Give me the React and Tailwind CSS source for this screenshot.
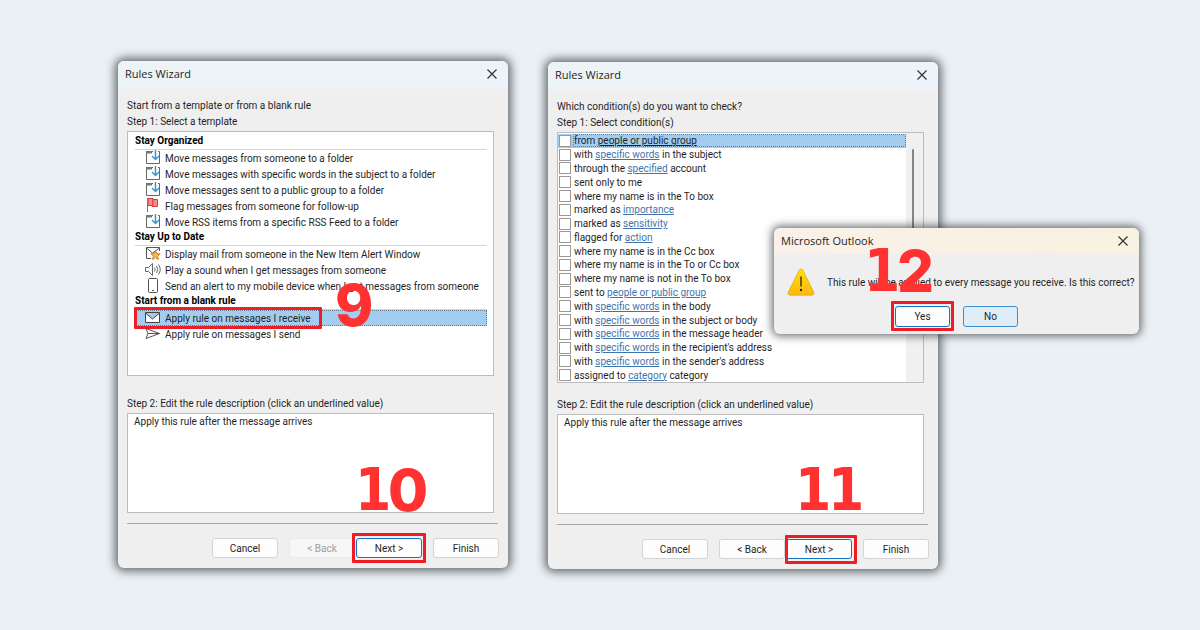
import { useState } from "react";

const templateGroups = [
  {
    title: "Stay Organized",
    items: [
      { icon: "folder", label: "Move messages from someone to a folder" },
      {
        icon: "folder",
        label: "Move messages with specific words in the subject to a folder",
      },
      {
        icon: "folder",
        label: "Move messages sent to a public group to a folder",
      },
      { icon: "flag", label: "Flag messages from someone for follow-up" },
      {
        icon: "folder",
        label: "Move RSS items from a specific RSS Feed to a folder",
      },
    ],
  },
  {
    title: "Stay Up to Date",
    items: [
      {
        icon: "alert",
        label: "Display mail from someone in the New Item Alert Window",
      },
      { icon: "sound", label: "Play a sound when I get messages from someone" },
      {
        icon: "phone",
        label:
          "Send an alert to my mobile device when I get messages from someone",
      },
    ],
  },
  {
    title: "Start from a blank rule",
    items: [
      { icon: "mail", label: "Apply rule on messages I receive" },
      { icon: "send", label: "Apply rule on messages I send" },
    ],
  },
];

// [text before, link, text after]
const conditions = [
  ["from ", "people or public group", ""],
  ["with ", "specific words", " in the subject"],
  ["through the ", "specified", " account"],
  ["sent only to me", "", ""],
  ["where my name is in the To box", "", ""],
  ["marked as ", "importance", ""],
  ["marked as ", "sensitivity", ""],
  ["flagged for ", "action", ""],
  ["where my name is in the Cc box", "", ""],
  ["where my name is in the To or Cc box", "", ""],
  ["where my name is not in the To box", "", ""],
  ["sent to ", "people or public group", ""],
  ["with ", "specific words", " in the body"],
  ["with ", "specific words", " in the subject or body"],
  ["with ", "specific words", " in the message header"],
  ["with ", "specific words", " in the recipient's address"],
  ["with ", "specific words", " in the sender's address"],
  ["assigned to ", "category", " category"],
];

const icons = {
  folder: (
    <>
      <path d="M1.500 1.500v12h13v-12H13M1 1.500h7" stroke="#666" fill="none" />
      <path d="M1 1h6v2.500H1z" fill="#777" />
      <path
        d="M10.500 0v9M7 6l3.500 3.500L14 6"
        stroke="#3f97cf"
        strokeWidth="1.500"
        fill="none"
      />
    </>
  ),
  flag: (
    <>
      <path d="M2.500 0v14" stroke="#777" />
      <path d="M3 .5h5v7H3z" fill="#f58a8a" stroke="#e03c3c" />
      <path d="M8 1.500h4.500v7H7v-1h1z" fill="#f58a8a" stroke="#e03c3c" />
    </>
  ),
  alert: (
    <>
      <path
        d="M6 12.500H1.500v-11h13V5M1.500 2l6 5 7-5"
        stroke="#555"
        fill="none"
      />
      <path
        d="M10.500 4.500l1.300 3.200 3.400.2-2.600 2.200.9 3.400-3-1.900-3 1.900.9-3.400-2.600-2.200 3.400-.2z"
        fill="#f7b45c"
        stroke="#e07f1c"
      />
    </>
  ),
  sound: (
    <path
      d="M.5 5.500h3l4-4v12l-4-4h-3zM9.500 5.500q1.500 2 0 4M11.500 4q2.500 3.500 0 7M13.500 2.500q3.500 5 0 10"
      stroke="#666"
      fill="none"
    />
  ),
  phone: (
    <>
      <rect x="3.500" y=".5" width="9" height="14" rx="1" stroke="#555" fill="none" />
      <path d="M7 12.500h2" stroke="#555" />
    </>
  ),
  mail: (
    <path d="M.5 2.500h14v10H.5zM.5 3l7 6 7-6" stroke="#444" fill="#fff" />
  ),
  send: (
    <path
      d="M1 2.500l13.500 5-13.500 5 2-5zM3 7.500h11"
      stroke="#555"
      fill="none"
    />
  ),
};

const RowIcon = ({ name }) => (
  <svg viewBox="0 0 16 16" className="size-4 shrink-0" aria-hidden="true">
    {icons[name]}
  </svg>
);

const CloseButton = () => (
  <button type="button" aria-label="Close" className="p-1">
    <svg viewBox="0 0 10 10" className="size-[10px]">
      <path d="M.5.5l9 9M9.500.5l-9 9" stroke="#333" strokeWidth="1.200" />
    </svg>
  </button>
);

const WizardButton = ({ children, disabled, primary }) => (
  <button
    type="button"
    disabled={disabled}
    className={`h-5 w-[66px] rounded-[3px] border text-[10px] ${
      primary
        ? "border-[#1474c4] bg-[#fdfdfd]"
        : disabled
          ? "border-[#ebebeb] bg-[#f6f6f6] text-[#a0a0a0]"
          : "border-[#d4d4d4] bg-[#fdfdfd]"
    }`}
  >
    {children}
  </button>
);

const Highlight = ({ className }) => (
  <span
    className={`pointer-events-none absolute rounded-[1px] border-[3px] border-[#ee1c25] ${className}`}
  />
);

const StepNumber = ({ value, className }) => (
  <span
    className={`pointer-events-none absolute flex text-[58px] leading-none font-extrabold text-[#ff3131] ${className}`}
  >
    {value.split("").map((digit, index) => (
      <span
        key={index}
        className={
          digit === "1"
            ? "w-[33px] font-['DejaVu_Sans_Condensed','DejaVu_Sans',sans-serif]"
            : "font-[Inter,sans-serif]"
        }
      >
        {digit}
      </span>
    ))}
  </span>
);

const Wizard = ({
  question,
  step,
  children,
  backDisabled,
  number,
  numberPlace,
  ring,
  className,
}) => (
  <section
    className={`relative min-w-0 flex-1 rounded-[6px] bg-[#efefef] shadow-[0_0_10px_3px_rgba(40,45,50,0.7)] ${className}`}
  >
    <header className="flex h-7 items-center justify-between rounded-t-[6px] bg-linear-to-r from-[#edf4f6] to-[#edf3fa] px-[7px] pb-0.5">
      <h2 className="font-['Open_Sans',sans-serif] text-[11px]">
        Rules Wizard
      </h2>
      <CloseButton />
    </header>
    <div className="px-[9px] pt-[9px] pb-[10px]">
      <p className="leading-4">{question}</p>
      <p className="leading-4">{step}</p>
      <div className="mt-px mr-[5px] h-[265px]">{children}</div>
      <p className="leading-4">
        Step 2: Edit the rule description (click an underlined value)
      </p>
      <div className="mt-px mr-[5px] h-[100px] border border-[#bcbcbc] bg-white px-1.5 leading-4">
        Apply this rule after the message arrives
      </div>
      <hr className="mt-[10px] mr-px border-[#aaa]" />
      <div className="mt-[14px] flex justify-end">
        <WizardButton>Cancel</WizardButton>
        <div className="ml-[11px]">
          <WizardButton disabled={backDisabled}>&lt; Back</WizardButton>
        </div>
        <div className="relative mr-[11px] ml-px">
          <WizardButton primary>Next &gt;</WizardButton>
          <Highlight className={ring} />
          <StepNumber value={number} className={numberPlace} />
        </div>
        <WizardButton>Finish</WizardButton>
      </div>
    </div>
  </section>
);

const TemplateList = () => {
  const [selected, setSelected] = useState("Apply rule on messages I receive");

  return (
    <div className="h-[245px] border border-[#bcbcbc] bg-white pt-0.5 pr-1.5 pl-[7px]">
      {templateGroups.map((group) => (
        <div key={group.title}>
          <h3 className="h-4 border-b border-[#d5d5d5] leading-[14px] font-bold text-black">
            {group.title}
          </h3>
          <ul>
            {group.items.map((item) => (
              <li key={item.label} className="relative">
                <button
                  type="button"
                  onClick={() => setSelected(item.label)}
                  className={`flex h-4 w-full items-center gap-1 pl-[10px] text-left whitespace-nowrap ${
                    item.label === selected
                      ? "bg-[#a3cdef] outline-1 -outline-offset-1 outline-[#667c8e] outline-dotted"
                      : ""
                  }`}
                >
                  <RowIcon name={item.icon} />
                  {item.label}
                </button>
                {item.label === selected && (
                  <>
                    <Highlight className="-top-[3px] -left-px h-[22px] w-[188px]" />
                    <StepNumber value="9" className="-top-[34px] left-[200px]" />
                  </>
                )}
              </li>
            ))}
          </ul>
        </div>
      ))}
    </div>
  );
};

const ConditionList = () => (
  <div className="flex h-[251px] border border-[#bcbcbc] bg-white">
    <ul className="flex flex-1 flex-col pt-px">
      {conditions.map(([before, link, after], index) => (
        <li
          key={index}
          className={`flex min-h-0 flex-1 items-center gap-0.5 pl-px ${
            index === 0 ? "bg-[#a3cdef]" : ""
          }`}
        >
          <input
            type="checkbox"
            id={`condition-${index}`}
            className="size-3 shrink-0 appearance-none border border-[#999] bg-white"
          />
          <label
            htmlFor={`condition-${index}`}
            className={`flex-1 pl-px leading-[13px] whitespace-pre ${
              index === 0
                ? "outline-1 -outline-offset-1 outline-[#667c8e] outline-dotted"
                : ""
            }`}
          >
            {before}
            {link && (
              <a
                href="#"
                className={`underline ${index === 0 ? "" : "text-[#3f74ad]"}`}
              >
                {link}
              </a>
            )}
            {after}
          </label>
        </li>
      ))}
    </ul>
    <div className="w-[17px] bg-[#f0f0f0] pt-4 pl-[6px]">
      <div className="h-[120px] w-0.5 rounded bg-[#858585]" />
    </div>
  </div>
);

const ConfirmDialog = () => (
  <section
    role="dialog"
    aria-label="Microsoft Outlook"
    className="absolute top-[228px] left-[774px] w-[365px] rounded-[6px] bg-[#efefef] pb-[7px] shadow-[0_0_9px_2px_rgba(40,45,50,0.7)]"
  >
    <header className="flex h-[26px] items-center justify-between rounded-t-[6px] bg-linear-to-r from-[#faf0e8] to-[#f8f2e1] px-[7px]">
      <h2 className="font-['Open_Sans',sans-serif] text-[11px]">
        Microsoft Outlook
      </h2>
      <CloseButton />
    </header>
    <div className="mt-[14px] flex items-center gap-3 pl-[13px]">
      <svg viewBox="0 0 28 28" className="size-7 shrink-0" aria-hidden="true">
        <defs>
          <linearGradient id="warning" x1="0" y1="0" x2="0" y2="1">
            <stop offset="0" stopColor="#ffe100" />
            <stop offset="1" stopColor="#fdb813" />
          </linearGradient>
        </defs>
        <path
          d="M12.300 2q1.700-2.600 3.400 0l11 22q1 3-1.700 3.200H3Q.3 27 1.300 24z"
          fill="url(#warning)"
          stroke="#dda51c"
          strokeWidth=".7"
        />
        <path d="M14 8.500v10" stroke="#222" strokeWidth="1.300" />
        <circle cx="14" cy="22" r="1.200" fill="#222" />
      </svg>
      <p className="whitespace-nowrap">
        This rule will be applied to every message you receive. Is this correct?
      </p>
    </div>
    <div className="mt-[10px] flex gap-[13px] pl-[121px]">
      <div className="relative">
        <button
          type="button"
          className="block h-[21px] w-[55px] rounded-[3px] border border-[#1474c4] bg-[#fdfdfd]"
        >
          Yes
        </button>
        <Highlight className="-inset-x-1 -top-[5px] -bottom-1" />
        <StepNumber value="12" className="bottom-[27px] -left-[31px]" />
      </div>
      <button
        type="button"
        className="h-[21px] w-[55px] rounded-[3px] border border-[#3b8ed0] bg-[#e0edf9]"
      >
        No
      </button>
    </div>
  </section>
);

const App = () => {
  return (
    <main className="relative flex min-h-screen items-start gap-10 bg-[#ebf0f4] pt-[61px] pr-[262px] pl-[118px] font-[Roboto,sans-serif] text-[10px] text-[#1f1f1f]">
      <Wizard
        question="Start from a template or from a blank rule"
        step="Step 1: Select a template"
        number="10"
        numberPlace="bottom-[39px] -left-px"
        ring="-inset-x-1 -inset-y-[5px]"
        backDisabled
        className=""
      >
        <TemplateList />
      </Wizard>
      <Wizard
        question="Which condition(s) do you want to check?"
        step="Step 1: Select condition(s)"
        number="11"
        numberPlace="bottom-[40px] left-[9px]"
        ring="-left-px -right-[5px] -top-1 -bottom-[5px]"
        className="mt-px"
      >
        <ConditionList />
      </Wizard>
      <ConfirmDialog />
    </main>
  );
};

export default App;
